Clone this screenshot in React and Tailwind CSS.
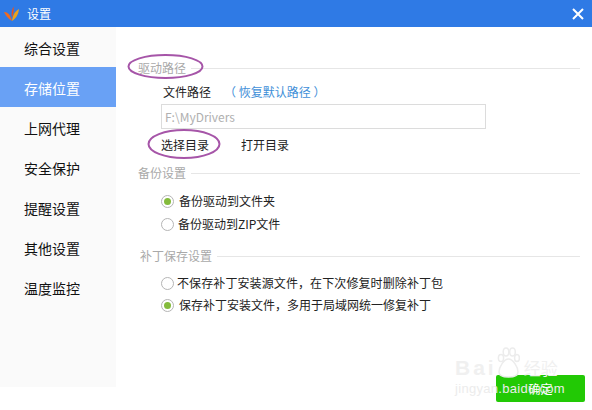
const FONT = "font-['Noto_Sans_CJK_SC','Noto_Sans',sans-serif]";

const menu = ['综合设置', '存储位置', '上网代理', '安全保护', '提醒设置', '其他设置', '温度监控'];

function SectionTitle({ children, className = '' }) {
  return (
    <div className={`flex items-center gap-[5px] h-[16px] text-[12px] text-[#a9a9a9] ${className}`}>
      <span>{children}</span>
      <div className="flex-1 h-px bg-[#e6e6e6]" />
    </div>
  );
}

function Radio({ checked, label, className = '', labelClass = 'ml-[5px]' }) {
  return (
    <div className={`flex items-center h-[16px] text-[12px] text-[#222] ${className}`}>
      <span className="w-[13px] h-[13px] rounded-full border border-[#b5b5b5] bg-white flex items-center justify-center shrink-0">
        {checked && <span className="w-[7px] h-[7px] rounded-full bg-[#84bb3c]" />}
      </span>
      <span className={labelClass}>{label}</span>
    </div>
  );
}

function Logo() {
  return (
    <svg width="16" height="16" viewBox="0 0 16 16" className="shrink-0">
      <path d="M0 6 C3 5.500 6 8 8 15 C5 13.500 2 10 0 6Z" fill="#ef6a1f" />
      <path d="M15 3 C14.500 8 12 12.500 8 15 C8.500 10 10.500 5.500 15 3Z" fill="#eba21c" />
      <path d="M9.500 0.500 C10 4 9.500 8 8 12 C7 8 7.500 4 9.500 0.500Z" fill="#e8541c" />
    </svg>
  );
}

function Paw() {
  return (
    <svg width="23" height="31" viewBox="0 0 23 31">
      <g fill="#fff" stroke="#ececec" strokeWidth="1.500">
        <ellipse cx="4" cy="11" rx="2.600" ry="3.600" />
        <ellipse cx="9" cy="5" rx="2.800" ry="4" />
        <ellipse cx="15.500" cy="5" rx="2.800" ry="4" />
        <ellipse cx="20" cy="11" rx="2.400" ry="3.600" />
        <path d="M11.500 12 C16 12 21 20 21 25 C21 29 17 30 11.500 30 C6 30 2 29 2 25 C2 20 7 12 11.500 12Z" />
      </g>
    </svg>
  );
}

export default function App() {
  return (
    <div className={`relative w-[592px] h-[410px] overflow-hidden bg-white ${FONT}`}>
      {/* 标题栏 */}
      <div className="h-[27px] bg-[#2f7ae5] flex items-center pl-[4px] pr-[8px] text-white">
        <Logo />
        <span className="ml-[7px] text-[12px]">设置</span>
        <svg width="12" height="12" viewBox="0 0 12 12" className="ml-auto">
          <path d="M1 1 L11 11 M11 1 L1 11" stroke="#fff" strokeWidth="2" />
        </svg>
      </div>

      <div className="flex">
        {/* 左侧菜单 */}
        <div className="w-[116px] h-[360px] bg-[#fafafa] shrink-0">
          {menu.map((item, i) => (
            <div
              key={item}
              className={`h-[40px] pl-[24px] pt-[2px] flex items-center text-[14px] ${i === 1 ? 'bg-[#69a1f5] text-white' : 'text-[#111]'}`}
            >
              {item}
            </div>
          ))}
        </div>

        {/* 右侧内容 */}
        <div className="flex-1 min-w-0 pl-[22px] pr-[12px] pt-[33px]">
          <SectionTitle>驱动路径</SectionTitle>
          <div className="pl-[25px] mt-[8px] flex h-[16px] items-center text-[12px] text-[#222]">
            <span>文件路径</span>
            <span className="ml-[13px] text-[#3f8fd8]">（ 恢复默认路径 ）</span>
          </div>
          <div className="ml-[23px] mt-[4px] w-[325px] h-[25px] border border-[#dcdcdc] flex items-center px-[3px] text-[12px] text-[#b0b0b0]">
            F:\MyDrivers
          </div>
          <div className="ml-[23px] mt-[8px] flex h-[16px] items-center gap-[32px] text-[12px] text-[#222]">
            <span>选择目录</span>
            <span>打开目录</span>
          </div>

          <SectionTitle className="mt-[12px]">备份设置</SectionTitle>
          <Radio checked label="备份驱动到文件夹" className="ml-[23px] mt-[12px]" />
          <Radio label="备份驱动到ZIP文件" className="ml-[23px] mt-[7px]" labelClass="ml-[4px]" />

          <SectionTitle className="mt-[16px] ml-[2px]">补丁保存设置</SectionTitle>
          <Radio label="不保存补丁安装源文件，在下次修复时删除补丁包" className="ml-[23px] mt-[11px]" labelClass="ml-[3px] tracking-[0.1px]" />
          <Radio checked label="保存补丁安装文件，多用于局域网统一修复补丁" className="ml-[23px] mt-[6px]" />

          <div className="ml-[358px] mt-[62px] w-[89px] h-[27px] rounded-[2px] bg-[#22c905] flex items-center justify-center text-[12px] text-white">
            确定
          </div>
        </div>
      </div>

      {/* 紫色标注圈 */}
      <svg width="592" height="410" className="absolute inset-0 pointer-events-none">
        <ellipse cx="165.500" cy="66.500" rx="37" ry="11.500" fill="none" stroke="#a655a8" strokeWidth="2" />
        <ellipse cx="184" cy="144" rx="35.500" ry="14" fill="none" stroke="#a655a8" strokeWidth="2" />
      </svg>

      {/* 水印 */}
      <div className="absolute left-[455px] top-[347px] flex items-end h-[31px] text-[#f0f0f0] pointer-events-none">
        <span className="text-[21px] leading-[20px] font-bold font-['Liberation_Sans',sans-serif] tracking-[3px]">Bai</span>
        <Paw />
        <span className="ml-[4px] text-[17px] leading-[20px]">经验</span>
      </div>
      <div className="absolute left-[455px] top-[382px] text-[13px] leading-[14px] tracking-[0.3px] font-['Liberation_Sans',sans-serif] text-[#ececec] pointer-events-none">
        jingyan.baidu.com
      </div>
    </div>
  );
}
